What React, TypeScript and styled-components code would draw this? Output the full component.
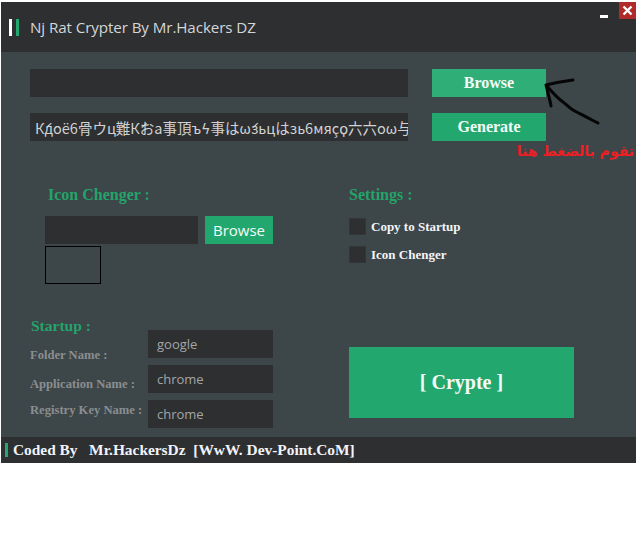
import React, { FC } from 'react';
import styled, { createGlobalStyle } from 'styled-components';

const GlobalStyle = createGlobalStyle`
  html, body {
    margin: 0;
    padding: 0;
    background: #ffffff;
  }
  * {
    box-sizing: border-box;
  }
`;

const GREEN = '#22a86e';
const DARK = '#2d2f31';
const SERIF = `"Liberation Serif", "Times New Roman", serif`;
const SANS = `"Open Sans", "Noto Sans", sans-serif`;

const WindowSC = styled.div`
  width: 635px;
  margin: 2px 0 0 1px;
  display: flex;
  flex-direction: column;
`;

const TitleBarSC = styled.div`
  height: 50px;
  background: ${DARK};
  display: flex;
  align-items: center;
  padding-left: 8px;
`;

const BarsSC = styled.div`
  display: flex;
  gap: 4px;
`;

const BarSC = styled.span<{ $color: string }>`
  display: block;
  width: 3px;
  height: 17px;
  background: ${(p) => p.$color};
`;

const TitleSC = styled.span`
  margin-left: 11px;
  font-family: ${SANS};
  font-size: 15.2px;
  color: #d4d6d8;
  letter-spacing: -0.1px;
`;

const ControlsSC = styled.div`
  margin-left: auto;
  align-self: flex-start;
  display: flex;
  align-items: flex-start;
`;

const MinimizeSC = styled.span`
  display: block;
  width: 8px;
  height: 3px;
  margin: 13px 11px 0 0;
  background: #ffffff;
`;

const CloseSC = styled.div`
  width: 17px;
  height: 17px;
  background: #b12a2a;
  display: flex;
  align-items: center;
  justify-content: center;
`;

const BodySC = styled.div`
  height: 385px;
  background: #3d4649;
  padding: 17px 0 0 29px;
`;

const TopFormSC = styled.div`
  position: relative;
  display: grid;
  grid-template-columns: 378px 114px;
  column-gap: 24px;
  row-gap: 16px;
  width: max-content;
`;

const FieldSC = styled.div<{ $h?: number }>`
  height: ${(p) => p.$h ?? 28}px;
  background: ${DARK};
  overflow: hidden;
  white-space: nowrap;
  display: flex;
  align-items: center;
  padding-left: 5px;
`;

const GarbledSC = styled.span`
  font-family: "Noto Sans CJK JP", "DejaVu Sans", sans-serif;
  font-size: 14.5px;
  color: #d2d2d2;
`;

const ButtonSC = styled.div<{ $bg?: string; $size?: number; $sans?: boolean }>`
  height: 28px;
  background: ${(p) => p.$bg ?? GREEN};
  display: flex;
  align-items: center;
  justify-content: center;
  color: #f4fbf7;
  font-family: ${(p) => (p.$sans ? SANS : SERIF)};
  font-weight: ${(p) => (p.$sans ? 400 : 700)};
  font-size: ${(p) => p.$size ?? 16}px;
`;

const ArrowSC = styled.svg`
  position: absolute;
  left: 506px;
  top: 4px;
`;

const HintSC = styled.div`
  position: absolute;
  left: 488px;
  top: 72px;
  width: 116px;
  direction: rtl;
  text-align: right;
  white-space: nowrap;
  font-family: "DejaVu Sans", sans-serif;
  font-weight: 700;
  font-size: 14px;
  line-height: 20px;
  color: #ec1f24;
`;

const SplitRowSC = styled.div<{ $top: number }>`
  margin-top: ${(p) => p.$top}px;
  display: grid;
  grid-template-columns: 319px 1fr;
`;

const CellSC = styled.div<{ $pad?: number }>`
  padding-left: ${(p) => p.$pad ?? 0}px;
  display: flex;
  flex-direction: column;
  align-items: flex-start;
`;

const HeadingSC = styled.div<{ $size?: number; $left?: number }>`
  font-family: ${SERIF};
  font-weight: 700;
  font-size: ${(p) => p.$size ?? 16}px;
  line-height: 18px;
  height: 18px;
  color: #24a36a;
  margin-left: ${(p) => p.$left ?? 0}px;
  white-space: nowrap;
`;

const IconRowSC = styled.div`
  margin-top: 12px;
  display: grid;
  grid-template-columns: 153px 68px;
  column-gap: 7px;
`;

const IconBoxSC = styled.div`
  margin-top: 2px;
  width: 56px;
  height: 38px;
  border: 1px solid #000000;
`;

const CheckListSC = styled.div`
  margin-top: 14px;
  display: flex;
  flex-direction: column;
  gap: 11px;
`;

const CheckRowSC = styled.label`
  display: flex;
  align-items: center;
  gap: 5px;
  font-family: ${SERIF};
  font-weight: 700;
  font-size: 13px;
  color: #f4f4f8;
`;

const CheckBoxSC = styled.span`
  width: 17px;
  height: 17px;
  background: ${DARK};
  border: 1px solid #333638;
`;

const StartupSC = styled.div`
  display: flex;
`;

const LabelsSC = styled.div`
  width: 118px;
  display: flex;
  flex-direction: column;
`;

const LabelSC = styled.div<{ $top: number }>`
  margin-top: ${(p) => p.$top}px;
  line-height: 16px;
  font-family: ${SERIF};
  font-weight: 700;
  font-size: 12.6px;
  color: #8b8e90;
  white-space: nowrap;
`;

const InputsSC = styled.div`
  width: 125px;
  padding-top: 13px;
  display: flex;
  flex-direction: column;
  gap: 7px;
`;

const ValueSC = styled.span`
  padding-left: 4px;
  font-family: ${SANS};
  font-size: 13px;
  color: #a3a5a7;
`;

const CrypteSC = styled(ButtonSC)`
  margin-top: 30px;
  width: 225px;
  height: 71px;
`;

const FooterSC = styled.div`
  height: 26px;
  background: ${DARK};
  display: flex;
  align-items: center;
  padding-left: 4px;
`;

const FooterBarSC = styled.span`
  display: block;
  width: 3px;
  height: 14px;
  background: ${GREEN};
`;

const FooterTextSC = styled.span`
  margin-left: 5px;
  white-space: pre;
  font-family: ${SERIF};
  font-weight: 700;
  font-size: 15.4px;
  color: #f2f3fb;
`;

const Arrow: FC = () => (
  <ArrowSC width="70" height="60" viewBox="0 0 70 60" fill="none">
    <path
      d="M37 7 C 30 8, 22 9, 10 12 M10 12 C 12 20, 14 27, 15 33 M10 12 C 16 19, 21 25, 27 29 C 31 32, 32 34, 37 37 C 44 41, 47 42, 56 47 C 58 48, 60 49, 62 50"
      stroke="#050505"
      strokeWidth="3"
      strokeLinecap="round"
      strokeLinejoin="round"
    />
  </ArrowSC>
);

const App: FC = () => (
  <>
    <GlobalStyle />
    <WindowSC>
      <TitleBarSC>
        <BarsSC>
          <BarSC $color="#ffffff" />
          <BarSC $color={GREEN} />
        </BarsSC>
        <TitleSC>Nj Rat Crypter By Mr.Hackers DZ</TitleSC>
        <ControlsSC>
          <MinimizeSC />
          <CloseSC>
            <svg width="11" height="11" viewBox="0 0 11 11">
              <path d="M1.5 1.5 L9.5 9.5 M9.5 1.5 L1.5 9.5" stroke="#fff" strokeWidth="2.4" />
            </svg>
          </CloseSC>
        </ControlsSC>
      </TitleBarSC>

      <BodySC>
        <TopFormSC>
          <FieldSC />
          <ButtonSC $bg="#30ae77">Browse</ButtonSC>
          <FieldSC>
            <GarbledSC>Ќдоё6骨ウц難Ќおa事頂ъϟ事はώзьцはзь6мяçϙ六六oω与ア</GarbledSC>
          </FieldSC>
          <ButtonSC>Generate</ButtonSC>
          <Arrow />
          <HintSC>تقوم بالضغط هنا</HintSC>
        </TopFormSC>

        <SplitRowSC $top={45}>
          <CellSC $pad={15}>
            <HeadingSC $left={3}>Icon Chenger :</HeadingSC>
            <IconRowSC>
              <FieldSC />
              <ButtonSC $sans $size={15}>Browse</ButtonSC>
            </IconRowSC>
            <IconBoxSC />
          </CellSC>
          <CellSC>
            <HeadingSC>Settings :</HeadingSC>
            <CheckListSC>
              <CheckRowSC>
                <CheckBoxSC />
                Copy to Startup
              </CheckRowSC>
              <CheckRowSC>
                <CheckBoxSC />
                Icon Chenger
              </CheckRowSC>
            </CheckListSC>
          </CellSC>
        </SplitRowSC>

        <SplitRowSC $top={33}>
          <StartupSC>
            <LabelsSC>
              <HeadingSC $size={15.5} $left={1}>Startup :</HeadingSC>
              <LabelSC $top={12}>Folder Name :</LabelSC>
              <LabelSC $top={13}>Application Name :</LabelSC>
              <LabelSC $top={10}>Registry Key Name :</LabelSC>
            </LabelsSC>
            <InputsSC>
              <FieldSC>
                <ValueSC>google</ValueSC>
              </FieldSC>
              <FieldSC>
                <ValueSC>chrome</ValueSC>
              </FieldSC>
              <FieldSC>
                <ValueSC>chrome</ValueSC>
              </FieldSC>
            </InputsSC>
          </StartupSC>
          <CellSC>
            <CrypteSC $size={20}>[ Crypte ]</CrypteSC>
          </CellSC>
        </SplitRowSC>
      </BodySC>

      <FooterSC>
        <FooterBarSC />
        <FooterTextSC>Coded By   Mr.HackersDz  [WwW. Dev-Point.CoM]</FooterTextSC>
      </FooterSC>
    </WindowSC>
  </>
);

export default App;
